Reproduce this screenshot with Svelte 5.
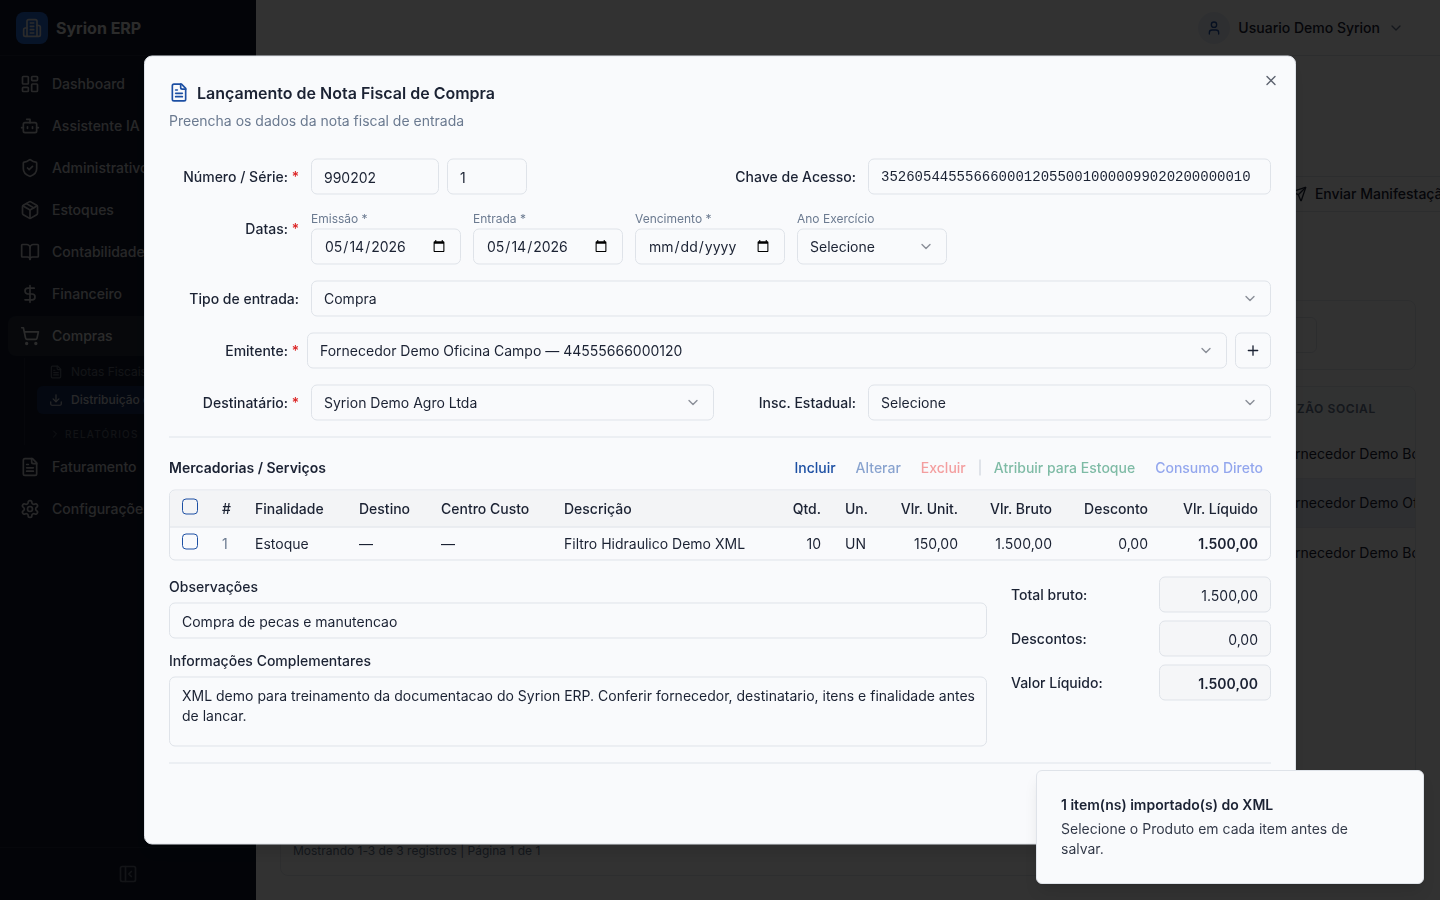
<script>
  const icons = {
    building: '<path d="M6 22V4a2 2 0 0 1 2-2h8a2 2 0 0 1 2 2v18Z"/><path d="M6 12H4a2 2 0 0 0-2 2v6a2 2 0 0 0 2 2h2"/><path d="M18 9h2a2 2 0 0 1 2 2v9a2 2 0 0 1-2 2h-2"/><path d="M10 6h4"/><path d="M10 10h4"/><path d="M10 14h4"/><path d="M10 18h4"/>',
    dashboard: '<rect width="7" height="9" x="3" y="3" rx="1"/><rect width="7" height="5" x="14" y="3" rx="1"/><rect width="7" height="9" x="14" y="12" rx="1"/><rect width="7" height="5" x="3" y="16" rx="1"/>',
    bot: '<path d="M12 8V4H8"/><rect width="16" height="12" x="4" y="8" rx="2"/><path d="M2 14h2"/><path d="M20 14h2"/><path d="M15 13v2"/><path d="M9 13v2"/>',
    shield: '<path d="M20 13c0 5-3.5 7.5-7.66 8.95a1 1 0 0 1-.67-.01C7.5 20.5 4 18 4 13V6a1 1 0 0 1 1-1c2 0 4.5-1.2 6.24-2.72a1.17 1.17 0 0 1 1.52 0C14.51 3.81 17 5 19 5a1 1 0 0 1 1 1z"/><path d="m9 12 2 2 4-4"/>',
    box: '<path d="m7.5 4.27 9 5.15"/><path d="M21 8a2 2 0 0 0-1-1.73l-7-4a2 2 0 0 0-2 0l-7 4A2 2 0 0 0 3 8v8a2 2 0 0 0 1 1.73l7 4a2 2 0 0 0 2 0l7-4A2 2 0 0 0 21 16Z"/><path d="m3.3 7 8.7 5 8.7-5"/><path d="M12 22V12"/>',
    book: '<path d="M12 7v14"/><path d="M3 18a1 1 0 0 1-1-1V4a1 1 0 0 1 1-1h5a4 4 0 0 1 4 4 4 4 0 0 1 4-4h5a1 1 0 0 1 1 1v13a1 1 0 0 1-1 1h-6a3 3 0 0 0-3 3 3 3 0 0 0-3-3z"/>',
    dollar: '<path d="M12 2v20"/><path d="M17 5H9.5a3.5 3.5 0 0 0 0 7h5a3.5 3.5 0 0 1 0 7H6"/>',
    cart: '<circle cx="8" cy="21" r="1"/><circle cx="19" cy="21" r="1"/><path d="M2.05 2.05h2l2.66 12.42a2 2 0 0 0 2 1.58h9.78a2 2 0 0 0 1.95-1.57l1.65-7.43H5.12"/>',
    file: '<path d="M15 2H6a2 2 0 0 0-2 2v16a2 2 0 0 0 2 2h12a2 2 0 0 0 2-2V7Z"/><path d="M14 2v4a2 2 0 0 0 2 2h4"/><path d="M10 9H8"/><path d="M16 13H8"/><path d="M16 17H8"/>',
    settings: '<path d="M12.22 2h-.44a2 2 0 0 0-2 2v.18a2 2 0 0 1-1 1.73l-.43.25a2 2 0 0 1-2 0l-.15-.08a2 2 0 0 0-2.73.73l-.22.38a2 2 0 0 0 .73 2.73l.15.1a2 2 0 0 1 1 1.72v.51a2 2 0 0 1-1 1.74l-.15.09a2 2 0 0 0-.73 2.73l.22.38a2 2 0 0 0 2.73.73l.15-.08a2 2 0 0 1 2 0l.43.25a2 2 0 0 1 1 1.73V20a2 2 0 0 0 2 2h.44a2 2 0 0 0 2-2v-.18a2 2 0 0 1 1-1.73l.43-.25a2 2 0 0 1 2 0l.15.08a2 2 0 0 0 2.73-.73l.22-.39a2 2 0 0 0-.73-2.73l-.15-.08a2 2 0 0 1-1-1.74v-.5a2 2 0 0 1 1-1.74l.15-.09a2 2 0 0 0 .73-2.73l-.22-.38a2 2 0 0 0-2.73-.73l-.15.08a2 2 0 0 1-2 0l-.43-.25a2 2 0 0 1-1-1.73V4a2 2 0 0 0-2-2z"/><circle cx="12" cy="12" r="3"/>',
    download: '<path d="M21 15v4a2 2 0 0 1-2 2H5a2 2 0 0 1-2-2v-4"/><path d="m7 10 5 5 5-5"/><path d="M12 15V3"/>',
    panel: '<rect width="18" height="18" x="3" y="3" rx="2"/><path d="M9 3v18"/><path d="m16 15-3-3 3-3"/>',
    user: '<path d="M19 21v-2a4 4 0 0 0-4-4H9a4 4 0 0 0-4 4v2"/><circle cx="12" cy="7" r="4"/>',
    send: '<path d="M14.536 21.686a.5.5 0 0 0 .937-.024l6.5-19a.496.496 0 0 0-.635-.635l-19 6.5a.5.5 0 0 0-.024.937l7.93 3.18a2 2 0 0 1 1.112 1.11z"/><path d="m21.854 2.147-10.94 10.939"/>',
    down: '<path d="m6 9 6 6 6-6"/>',
    right: '<path d="m9 18 6-6-6-6"/>',
    plus: '<path d="M5 12h14"/><path d="M12 5v14"/>',
    close: '<path d="M18 6 6 18"/><path d="m6 6 12 12"/>',
  };

  const menuTop = [
    { icon: 'dashboard', label: 'Dashboard' },
    { icon: 'bot', label: 'Assistente IA' },
    { icon: 'shield', label: 'Administrativo' },
    { icon: 'box', label: 'Estoques' },
    { icon: 'book', label: 'Contabilidade' },
    { icon: 'dollar', label: 'Financeiro' },
    { icon: 'cart', label: 'Compras', active: true },
  ];
  const menuBottom = [
    { icon: 'file', label: 'Faturamento' },
    { icon: 'settings', label: 'Configurações' },
  ];

  const fornecedores = [
    { nome: 'Fornecedor Demo Bo' },
    { nome: 'Fornecedor Demo Oficina Campo', selected: true },
    { nome: 'Fornecedor Demo Bo' },
  ];

  let nota = $state({
    numero: '990202',
    serie: '1',
    chave: '35260544555666000120550010000099020200000010',
    emissao: '2026-05-14',
    entrada: '2026-05-14',
    vencimento: '',
    obs: 'Compra de pecas e manutencao',
    info: 'XML demo para treinamento da documentacao do Syrion ERP. Conferir fornecedor, destinatario, itens e finalidade antes de lancar.',
  });

  let itens = $state([
    { finalidade: 'Estoque', destino: '—', centro: '—', descricao: 'Filtro Hidraulico Demo XML', qtd: '10', un: 'UN', unit: '150,00', bruto: '1.500,00', desconto: '0,00', liquido: '1.500,00', marcado: false },
  ]);
  let todos = $state(false);
  let open = $state(true);
</script>

{#snippet icon(name, size)}
  <svg width={size} height={size} viewBox="0 0 24 24" fill="none" stroke="currentColor" stroke-width="2" stroke-linecap="round" stroke-linejoin="round" aria-hidden="true">{@html icons[name]}</svg>
{/snippet}

{#snippet menuItem(item)}
  <a href="#/" class="nav-item" class:active={item.active}>
    {@render icon(item.icon, 20)}
    <span>{item.label}</span>
  </a>
{/snippet}

{#snippet select(id, value)}
  <div class="select">
    <select {id} class="field"><option>{value}</option></select>
    {@render icon('down', 16)}
  </div>
{/snippet}

<div class="app">
  <aside class="sidebar">
    <div class="brand">
      <div class="logo">{@render icon('building', 20)}</div>
      <span>Syrion ERP</span>
    </div>
    <nav class="nav">
      {#each menuTop as item}
        {@render menuItem(item)}
      {/each}
      <div class="submenu">
        <a href="#/" class="sub-item">{@render icon('file', 14)}<span>Notas Fiscais</span></a>
        <a href="#/" class="sub-item current">{@render icon('download', 14)}<span>Distribuição de NF-e</span></a>
        <button class="sub-group">{@render icon('right', 12)}<span>Relatórios</span></button>
      </div>
      {#each menuBottom as item}
        {@render menuItem(item)}
      {/each}
    </nav>
    <div class="collapse">
      <button aria-label="Recolher menu">{@render icon('panel', 20)}</button>
    </div>
  </aside>

  <div class="page">
    <header class="topbar">
      <button class="user">
        <span class="avatar">{@render icon('user', 16)}</span>
        <span>Usuario Demo Syrion</span>
        {@render icon('down', 16)}
      </button>
    </header>
    <main class="main">
      <div class="toolbar">
        <button class="send">{@render icon('send', 16)}<span>Enviar Manifestação</span></button>
      </div>
      <div class="card filters">
        <input class="filter" aria-label="Filtro" />
      </div>
      <div class="card list">
        <table class="list-table">
          <thead>
            <tr><th></th><th class="name">Razão Social</th></tr>
          </thead>
          <tbody>
            {#each fornecedores as f}
              <tr class:selected={f.selected}><td></td><td class="name">{f.nome}</td></tr>
            {/each}
          </tbody>
        </table>
        <div class="list-footer">Mostrando 1-3 de 3 registros | Página 1 de 1</div>
      </div>
    </main>
  </div>
</div>

{#if open}
  <div class="overlay"></div>
  <div class="modal" role="dialog" aria-modal="true" aria-labelledby="titulo">
    <div class="modal-header">
      <h2 id="titulo">{@render icon('file', 20)}Lançamento de Nota Fiscal de Compra</h2>
      <p>Preencha os dados da nota fiscal de entrada</p>
    </div>
    <button class="close" aria-label="Fechar" onclick={() => (open = false)}>{@render icon('close', 16)}</button>

    <div class="form">
      <div class="row four">
        <label for="numero">Número / Série: <b>*</b></label>
        <div class="inline">
          <input id="numero" class="field numero" bind:value={nota.numero} />
          <input class="field serie" aria-label="Série" bind:value={nota.serie} />
        </div>
        <label for="chave">Chave de Acesso:</label>
        <input id="chave" class="field mono" bind:value={nota.chave} />
      </div>

      <div class="row dates-row">
        <label for="emissao">Datas: <b>*</b></label>
        <div class="dates">
          <div class="date">
            <label for="emissao">Emissão *</label>
            <input id="emissao" type="date" class="field" bind:value={nota.emissao} />
          </div>
          <div class="date">
            <label for="entrada">Entrada *</label>
            <input id="entrada" type="date" class="field" bind:value={nota.entrada} />
          </div>
          <div class="date">
            <label for="vencimento">Vencimento *</label>
            <input id="vencimento" type="date" class="field" bind:value={nota.vencimento} />
          </div>
          <div class="date">
            <label for="ano">Ano Exercício</label>
            {@render select('ano', 'Selecione')}
          </div>
        </div>
      </div>

      <div class="row">
        <label for="tipo">Tipo de entrada:</label>
        {@render select('tipo', 'Compra')}
      </div>

      <div class="row emitente">
        <label for="emitente">Emitente: <b>*</b></label>
        {@render select('emitente', 'Fornecedor Demo Oficina Campo — 44555666000120')}
        <button class="add" aria-label="Novo emitente">{@render icon('plus', 16)}</button>
      </div>

      <div class="row four">
        <label for="destinatario">Destinatário: <b>*</b></label>
        {@render select('destinatario', 'Syrion Demo Agro Ltda')}
        <label for="insc">Insc. Estadual:</label>
        {@render select('insc', 'Selecione')}
      </div>

      <hr />

      <section class="items">
        <div class="items-bar">
          <h3>Mercadorias / Serviços</h3>
          <div class="actions">
            <button class="incluir">Incluir</button>
            <button class="alterar" disabled>Alterar</button>
            <button class="excluir" disabled>Excluir</button>
            <span class="sep"></span>
            <button class="atribuir" disabled>Atribuir para Estoque</button>
            <button class="consumo" disabled>Consumo Direto</button>
          </div>
        </div>
        <div class="table-wrap">
          <table class="items-table">
            <colgroup>
              <col class="c-check" /><col class="c-num" /><col class="c-fin" /><col class="c-dest" /><col class="c-centro" /><col />
              <col class="c-qtd" /><col class="c-un" /><col class="c-unit" /><col class="c-bruto" /><col class="c-desc" /><col class="c-liq" />
            </colgroup>
            <thead>
              <tr>
                <th><input type="checkbox" aria-label="Selecionar todos" bind:checked={todos} /></th>
                <th>#</th>
                <th>Finalidade</th>
                <th>Destino</th>
                <th>Centro Custo</th>
                <th>Descrição</th>
                <th class="num">Qtd.</th>
                <th>Un.</th>
                <th class="num">Vlr. Unit.</th>
                <th class="num">Vlr. Bruto</th>
                <th class="num">Desconto</th>
                <th class="num">Vlr. Líquido</th>
              </tr>
            </thead>
            <tbody>
              {#each itens as item, i}
                <tr>
                  <td><input type="checkbox" aria-label="Selecionar item {i + 1}" bind:checked={item.marcado} /></td>
                  <td class="muted">{i + 1}</td>
                  <td>{item.finalidade}</td>
                  <td>{item.destino}</td>
                  <td>{item.centro}</td>
                  <td>{item.descricao}</td>
                  <td class="num">{item.qtd}</td>
                  <td>{item.un}</td>
                  <td class="num">{item.unit}</td>
                  <td class="num">{item.bruto}</td>
                  <td class="num">{item.desconto}</td>
                  <td class="num strong">{item.liquido}</td>
                </tr>
              {/each}
            </tbody>
          </table>
        </div>
      </section>

      <div class="bottom">
        <div class="notes">
          <div class="note">
            <label for="obs">Observações</label>
            <input id="obs" class="field" bind:value={nota.obs} />
          </div>
          <div class="note">
            <label for="info">Informações Complementares</label>
            <textarea id="info" class="field" bind:value={nota.info}></textarea>
          </div>
        </div>
        <div class="totals">
          <div class="total">
            <label for="bruto">Total bruto:</label>
            <input id="bruto" class="field" readonly value="1.500,00" />
          </div>
          <div class="total">
            <label for="descontos">Descontos:</label>
            <input id="descontos" class="field" readonly value="0,00" />
          </div>
          <div class="total">
            <label for="liquido">Valor Líquido:</label>
            <input id="liquido" class="field strong" readonly value="1.500,00" />
          </div>
        </div>
      </div>

      <div class="modal-footer"></div>
    </div>
  </div>
{/if}

<div class="toast" role="status">
  <strong>1 item(ns) importado(s) do XML</strong>
  <p>Selecione o Produto em cada item antes de salvar.</p>
</div>

<style>
  :global(body) {
    margin: 0;
    background: #fafafa;
    color: #1b2233;
    font-family: Inter, "Liberation Sans", sans-serif;
    font-size: 14px;
    line-height: 20px;
    text-rendering: optimizeSpeed;
    overflow: hidden;
  }
  :global(*) {
    box-sizing: border-box;
  }
  svg {
    flex-shrink: 0;
    display: block;
  }
  button {
    font: inherit;
    color: inherit;
    background: none;
    border: 0;
    padding: 0;
    cursor: pointer;
  }
  a {
    color: inherit;
    text-decoration: none;
  }
  h2, h3, p {
    margin: 0;
  }

  /* layout */
  .app {
    display: flex;
    height: 100vh;
  }
  .sidebar {
    width: 256px;
    flex-shrink: 0;
    display: flex;
    flex-direction: column;
    background: #0f172a;
    color: #c4c4c8;
    font-weight: 500;
  }
  .brand {
    display: flex;
    align-items: center;
    gap: 8px;
    height: 56px;
    padding: 0 16px;
    border-bottom: 1px solid #1e273a;
    font-size: 16px;
    font-weight: 700;
    color: #d8d8d8;
  }
  .logo {
    width: 32px;
    height: 32px;
    border-radius: 8px;
    background: #2563c9;
    display: flex;
    align-items: center;
    justify-content: center;
  }
  .nav {
    flex: 1;
    display: flex;
    flex-direction: column;
    gap: 2px;
    padding: 8px;
    white-space: nowrap;
  }
  .nav-item {
    display: flex;
    align-items: center;
    gap: 12px;
    height: 40px;
    padding: 0 12px;
    border-radius: 8px;
  }
  .nav-item.active {
    background: #232a3b;
    color: #d8d8d8;
  }
  .submenu {
    display: flex;
    flex-direction: column;
    margin-left: 16px;
    padding-left: 12px;
    border-left: 1px solid #1e273a;
    font-size: 12px;
    line-height: 16px;
    color: #5f6573;
    font-weight: 400;
  }
  .sub-item {
    display: flex;
    align-items: center;
    gap: 8px;
    height: 28px;
    padding: 0 12px;
    border-radius: 6px;
  }
  .sub-item.current {
    background: #152a58;
    color: #c8c8cc;
    font-weight: 500;
  }
  .sub-group {
    display: flex;
    align-items: center;
    gap: 4px;
    height: 27px;
    margin-top: 4px;
    padding: 4px 12px 0;
    font-size: 10px;
    font-weight: 500;
    letter-spacing: 0.12em;
    text-transform: uppercase;
    line-height: 16px;
    color: #565c6a;
  }
  .collapse {
    display: flex;
    justify-content: center;
    align-items: center;
    height: 53px;
    border-top: 1px solid #1e273a;
    color: #5f6573;
  }
  .page {
    flex: 1;
    min-width: 0;
    display: flex;
    flex-direction: column;
  }
  .topbar {
    display: flex;
    justify-content: flex-end;
    align-items: center;
    height: 56px;
    flex-shrink: 0;
    padding: 0 36px;
    border-bottom: 1px solid #dcdfe6;
  }
  .user {
    display: flex;
    align-items: center;
    gap: 8px;
    font-weight: 500;
  }
  .user > svg {
    color: #64748b;
  }
  .avatar {
    width: 32px;
    height: 32px;
    border-radius: 50%;
    background: #e5eaf4;
    color: #1e4fa3;
    display: flex;
    align-items: center;
    justify-content: center;
  }
  .main {
    flex: 1;
    display: flex;
    flex-direction: column;
    min-height: 0;
    padding: 120px 24px 24px;
    overflow: hidden;
  }
  .toolbar {
    display: flex;
    justify-content: flex-end;
    margin-right: -52px;
    margin-bottom: 88px;
  }
  .send {
    display: flex;
    align-items: center;
    gap: 8px;
    height: 36px;
    padding: 0 16px;
    border: 1px solid #dcdfe6;
    border-radius: 6px;
    font-weight: 500;
    white-space: nowrap;
  }
  .card {
    border: 1px solid #e2e5ea;
    border-radius: 8px;
    overflow: hidden;
  }
  .filters {
    padding: 16px 98px 16px 16px;
    margin-bottom: 16px;
    flex-shrink: 0;
  }
  .filter {
    display: block;
    width: 100%;
    height: 36px;
    border: 1px solid #dcdfe6;
    border-radius: 6px;
    background: transparent;
  }
  .list {
    flex: 1;
    display: flex;
    flex-direction: column;
    justify-content: space-between;
  }
  .list-table {
    width: 100%;
    table-layout: fixed;
    border-collapse: separate;
    border-spacing: 0;
    text-align: left;
    white-space: nowrap;
  }
  .list-table th {
    height: 43px;
    padding: 0;
    background: #f6f7f8;
    font-size: 12px;
    font-weight: 600;
    letter-spacing: 0.05em;
    text-transform: uppercase;
    color: #64748b;
  }
  .list-table td {
    height: 49px;
    padding: 0;
    border-bottom: 1px solid #dfe2e8;
  }
  .list-table tr:last-child td {
    border-bottom: 0;
  }
  .list-table .name {
    width: 148px;
    padding-left: 12px;
  }
  .selected {
    background: #e6ebf3;
  }
  .list-footer {
    padding: 0 12px 14px;
    font-size: 12px;
    line-height: 20px;
    color: #64748b;
  }

  /* modal */
  .overlay {
    position: fixed;
    inset: 0;
    background: rgba(0, 0, 0, 0.8);
  }
  .modal {
    position: fixed;
    top: 50%;
    left: 50%;
    transform: translate(-50%, -50%);
    width: 80%;
    padding: 24px;
    border: 1px solid #dfe3e9;
    border-radius: 8px;
    background: #f9fafc;
    box-shadow: 0 10px 15px rgba(0, 0, 0, 0.1);
  }
  .modal-header h2 {
    display: flex;
    align-items: center;
    gap: 8px;
    font-size: 16px;
    line-height: 24px;
    font-weight: 600;
  }
  .modal-header h2 svg {
    color: #1c4fa3;
  }
  .modal-header p {
    margin-top: 6px;
    color: #6b7a90;
  }
  .close {
    position: absolute;
    top: 16px;
    right: 16px;
    opacity: 0.7;
  }
  .form {
    display: flex;
    flex-direction: column;
    gap: 16px;
    margin-top: 28px;
  }
  .row {
    display: grid;
    grid-template-columns: 130px 1fr;
    gap: 12px;
    align-items: center;
  }
  .row.four {
    grid-template-columns: 130px 1fr 130px 1fr;
  }
  .row.emitente {
    grid-template-columns: 130px 1fr 36px;
    gap: 8px;
  }
  .row > label {
    text-align: right;
    font-weight: 500;
  }
  .row b {
    color: #dc2626;
    font-weight: 500;
  }
  .row.dates-row {
    align-items: start;
  }
  .dates-row > label {
    padding-top: 8px;
  }
  .field {
    display: block;
    width: 100%;
    min-width: 0;
    height: 36px;
    margin: 0;
    padding: 4px 12px;
    border: 1px solid #dfe3e9;
    border-radius: 6px;
    background: #f9fafc;
    color: inherit;
    font-family: inherit;
    font-size: 14px;
    line-height: 20px;
    text-rendering: inherit;
    outline: none;
  }
  .mono {
    font-family: "Liberation Mono", monospace;
  }
  .inline {
    display: flex;
    gap: 8px;
  }
  .numero {
    width: 128px;
  }
  .serie {
    width: 80px;
  }
  .dates {
    display: flex;
    gap: 12px;
  }
  .date {
    display: flex;
    flex-direction: column;
    gap: 2px;
    width: 150px;
  }
  .date label {
    font-size: 12px;
    line-height: 16px;
    color: #6b7a90;
  }
  .select {
    position: relative;
  }
  select.field {
    appearance: none;
    padding-right: 36px;
  }
  .select svg {
    position: absolute;
    right: 13px;
    top: 10px;
    opacity: 0.5;
    pointer-events: none;
  }
  .add {
    display: flex;
    align-items: center;
    justify-content: center;
    height: 36px;
    border: 1px solid #dfe3e9;
    border-radius: 6px;
  }
  hr {
    width: 100%;
    height: 1px;
    margin: 0;
    border: 0;
    background: #dfe3e9;
  }

  .items-bar {
    display: flex;
    justify-content: space-between;
    align-items: center;
    height: 28px;
    margin-bottom: 8px;
  }
  .items-bar h3 {
    font-size: 14px;
    font-weight: 600;
  }
  .actions {
    display: flex;
    align-items: center;
    gap: 4px;
  }
  .actions button {
    height: 28px;
    padding: 0 8px;
    font-weight: 500;
  }
  .actions button:disabled {
    opacity: 0.5;
  }
  .actions .incluir,
  .actions .alterar {
    color: #1c4fa3;
  }
  .actions .excluir {
    color: #ef4444;
  }
  .actions .atribuir {
    color: #067d50;
  }
  .actions .consumo {
    color: #2f55e0;
  }
  .sep {
    width: 2px;
    height: 16px;
    margin: 0 1px;
    background: #dfe3e9;
  }
  .table-wrap {
    border: 1px solid #dfe3e9;
    border-radius: 6px;
    overflow: hidden;
  }
  .items-table {
    width: 100%;
    table-layout: fixed;
    border-collapse: separate;
    border-spacing: 0;
    text-align: left;
    white-space: nowrap;
  }
  .items-table th {
    height: 37px;
    padding: 0 12px;
    border-bottom: 1px solid #dfe3e9;
    background: #f3f4f6;
    font-weight: 500;
  }
  .items-table td {
    height: 32px;
    padding: 0 12px;
  }
  .items-table .num {
    text-align: right;
  }
  .muted {
    color: #6b7a90;
  }
  .strong {
    font-weight: 600;
  }
  .c-check { width: 40px; }
  .c-num { width: 33px; }
  .c-fin { width: 104px; }
  .c-dest { width: 82px; }
  .c-centro { width: 123px; }
  .c-qtd { width: 56px; }
  .c-un { width: 46px; }
  .c-unit { width: 91px; }
  .c-bruto { width: 94px; }
  .c-desc { width: 96px; }
  .c-liq { width: 110px; }
  input[type="checkbox"] {
    appearance: none;
    display: block;
    width: 16px;
    height: 16px;
    margin: 0 0 4px;
    border: 1px solid #1c4fa3;
    border-radius: 4px;
  }
  input[type="checkbox"]:checked {
    background: #1c4fa3;
  }

  .bottom {
    display: grid;
    grid-template-columns: 1fr 260px;
    gap: 24px;
  }
  .notes {
    display: flex;
    flex-direction: column;
    gap: 12px;
  }
  .note {
    display: flex;
    flex-direction: column;
    gap: 6px;
  }
  .note label,
  .total label {
    font-weight: 500;
  }
  textarea.field {
    height: 70px;
    padding: 8px 4px 8px 12px;
    resize: none;
  }
  .totals {
    display: flex;
    flex-direction: column;
    gap: 8px;
  }
  .total {
    display: flex;
    justify-content: space-between;
    align-items: center;
  }
  .total .field {
    width: 112px;
    text-align: right;
    background: #f5f6f8;
  }
  .modal-footer {
    height: 57px;
    border-top: 1px solid #dfe3e9;
  }

  /* toast */
  .toast {
    position: fixed;
    right: 16px;
    bottom: 16px;
    width: 388px;
    padding: 24px 56px 24px 24px;
    border: 1px solid #dfe3e9;
    border-radius: 6px;
    background: #f9fafc;
    box-shadow: 0 10px 15px -3px rgba(0, 0, 0, 0.1), 0 4px 6px -4px rgba(0, 0, 0, 0.1);
  }
  .toast strong {
    display: block;
    font-weight: 600;
  }
  .toast p {
    margin-top: 4px;
    opacity: 0.9;
  }
</style>
